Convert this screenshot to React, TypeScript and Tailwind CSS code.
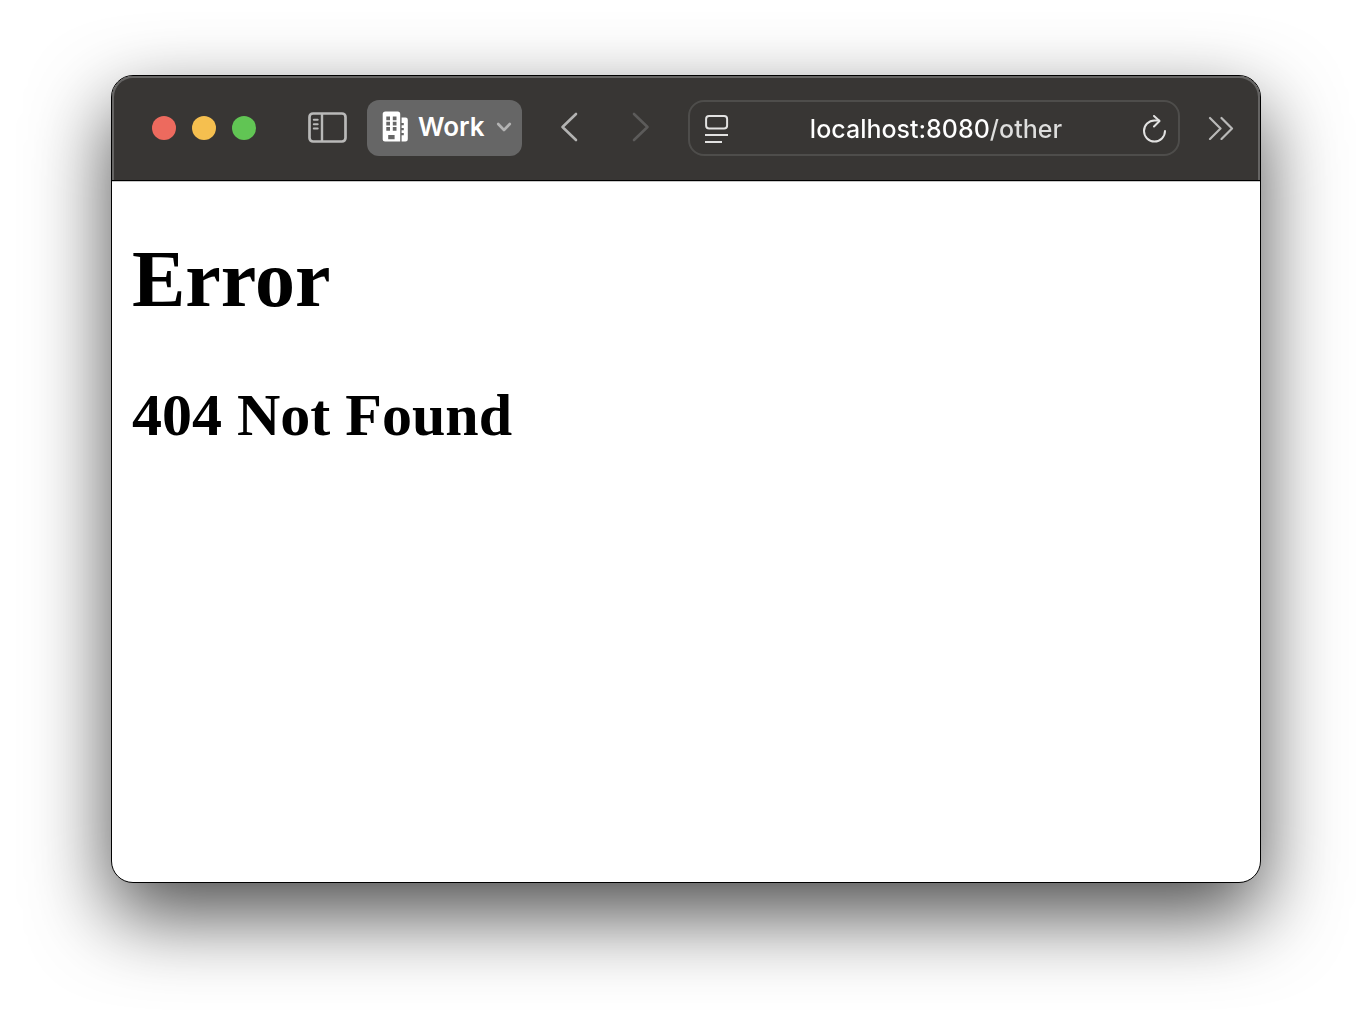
import { useState } from 'react';

function SidebarIcon() {
  return (
    <svg className="w-10 h-8" viewBox="0 0 40 32" fill="none" stroke="#b9b9b8" strokeLinecap="round">
      <rect x="1.5" y="1.5" width="36" height="28" rx="3.5" strokeWidth="2.7" />
      <path d="M14 2V29" strokeWidth="2.4" strokeLinecap="butt" />
      <path d="M5.8 7.7H9.7M5.8 12.2H9.7M5.8 16.5H9.7" strokeWidth="2" />
    </svg>
  );
}

function BuildingIcon() {
  return (
    <svg className="w-7 h-8" viewBox="0 0 28 32" fill="#fff">
      <path
        fillRule="evenodd"
        d="M3.5 .5H15.7Q18.2 .5 18.2 3V30.5H3Q.7 30.5 .7 28.5V3Q.7 .5 3.5 .5ZM4.3 5.5V9.3H8V5.5ZM10.8 5.5V9.3H14.5V5.5ZM4.3 10.7V14.5H8V10.7ZM10.8 10.7V14.5H14.5V10.7ZM4.3 15.9V19.7H8V15.9ZM10.8 15.9V19.7H14.5V15.9ZM6.2 23.9V28.3H12.6V23.9Z"
      />
      <path d="M19.6 6.5H23.5Q25.8 6.5 25.8 8.8V28.2Q25.8 30.5 23.5 30.5H19.6V24.3H21.8V22H19.6V19.2H21.8V17H19.6V14.3H21.8V12H19.6Z" />
    </svg>
  );
}

function ReaderIcon() {
  return (
    <svg className="w-6 h-7" viewBox="0 0 24 28" fill="none" stroke="#e2e2e1" strokeWidth="2">
      <rect x="1.1" y="1" width="21" height="12.6" rx="3" />
      <path d="M0 20H23M0 27H17" />
    </svg>
  );
}

function ReloadIcon() {
  return (
    <svg
      className="w-6 h-7"
      viewBox="0 0 24 28"
      fill="none"
      stroke="#e2e2e1"
      strokeWidth="2"
      strokeLinecap="round"
      strokeLinejoin="round"
    >
      <path d="M22 16A10.5 10.5 0 1 1 11.5 5.5H16" />
      <path d="M11 1L16.5 6L11 11.5" />
    </svg>
  );
}

export default function App() {
  const [address, setAddress] = useState('localhost:8080/other');

  return (
    <div className="min-h-screen flex bg-white px-[111px] pt-[75px] pb-[147px]">
      <div className="flex-1 flex flex-col rounded-[22px] border border-black bg-white overflow-hidden shadow-[0_32px_80px_rgba(0,0,0,0.7)]">
        <header className="bg-[#383634] border-b border-black">
          <div className="flex items-center h-26 pl-[38px] pr-[22px] pb-0.5 rounded-t-[21px] border-2 border-b-0 border-[#666564] font-[Inter,sans-serif]">
            <div className="flex gap-4">
              <button aria-label="Close" className="w-6 h-6 rounded-full bg-[#ed6a5e]" />
              <button aria-label="Minimize" className="w-6 h-6 rounded-full bg-[#f5bf4f]" />
              <button aria-label="Zoom" className="w-6 h-6 rounded-full bg-[#61c554]" />
            </div>

            <button aria-label="Show sidebar" className="ml-[52px]">
              <SidebarIcon />
            </button>

            <button className="ml-[19px] flex items-center h-14 w-[155px] pl-[15px] pb-0.5 rounded-xl bg-[#666666] text-white">
              <BuildingIcon />
              <span className="ml-2 text-[26px] leading-8 font-semibold">Work</span>
              <svg className="ml-auto mr-[10px] w-4 h-3" viewBox="0 0 16 12" fill="none" stroke="#b3b3b3" strokeWidth="2.6" strokeLinecap="round" strokeLinejoin="round">
                <path d="M2.2 3L8 9L13.8 3" />
              </svg>
            </button>

            <button aria-label="Back" className="ml-[38px]">
              <svg className="w-5 h-8" viewBox="0 0 20 32" fill="none" stroke="#b3b3b2" strokeWidth="2.6" strokeLinecap="round" strokeLinejoin="round">
                <path d="M16 2L2.5 15L16 28" />
              </svg>
            </button>
            <button aria-label="Forward" className="ml-[51px]" disabled>
              <svg className="w-5 h-8" viewBox="0 0 20 32" fill="none" stroke="#5c5b5a" strokeWidth="2.6" strokeLinecap="round" strokeLinejoin="round">
                <path d="M3 2L16.5 15L3 28" />
              </svg>
            </button>

            <div className="ml-[37px] flex-1 min-w-0 flex items-center h-14 pl-[15px] pr-[11px] pt-0.5 rounded-2xl border-2 border-[#4e4d4b]">
              <button aria-label="Page menu">
                <ReaderIcon />
              </button>
              {/* host is full white, the path after it is dimmed */}
              <input
                type="text"
                aria-label="Address"
                value={address}
                onChange={(e) => setAddress(e.target.value)}
                className="flex-1 min-w-0 text-center text-[25px] leading-8 font-medium outline-none text-transparent caret-white bg-clip-text bg-[linear-gradient(90deg,#ffffff_calc(50%+54px),#dededd_calc(50%+54px))]"
              />
              <button aria-label="Reload">
                <ReloadIcon />
              </button>
            </div>

            <button aria-label="More" className="ml-7">
              <svg className="w-7 h-6" viewBox="0 0 28 24" fill="none" stroke="#b9b9b8" strokeWidth="2.2" strokeLinecap="round" strokeLinejoin="round">
                <path d="M2 2L12.5 12.5L2 23M13.5 2L24 12.5L13.5 23" />
              </svg>
            </button>
          </div>
        </header>

        <main className="flex-1 px-5 pt-[51px] border-t border-[#c8c8c8] text-black font-bold font-['Liberation_Serif',serif]">
          <h1 className="text-[80px] leading-[92px]">Error</h1>
          <h2 className="mt-14 text-[60px] leading-[68px]">404 Not Found</h2>
        </main>
      </div>
    </div>
  );
}
